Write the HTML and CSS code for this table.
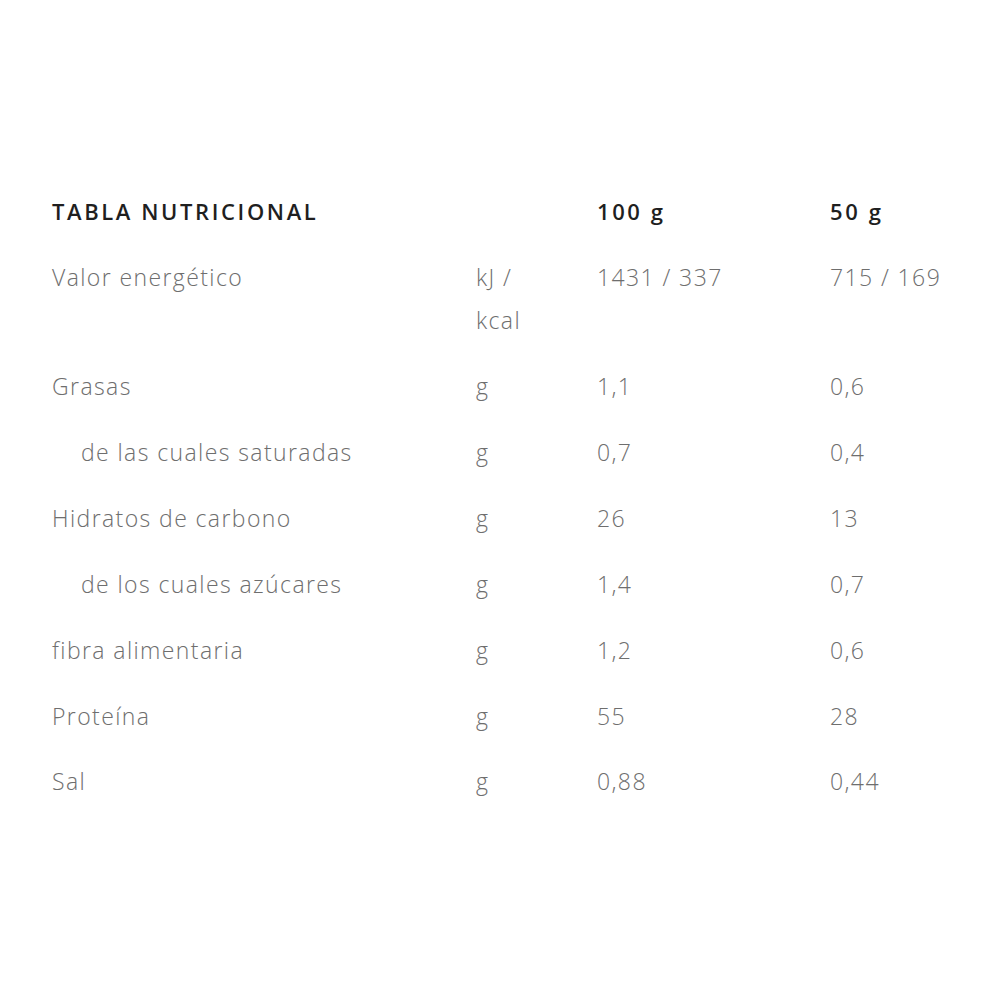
FILE: index.html
```html
<!DOCTYPE html>
<html lang="es">
<head>
<meta charset="utf-8">
<title>Tabla nutricional</title>
<link rel="stylesheet" href="styles.css">
</head>
<body>
<div class="table">
  <div class="row head">
    <div class="c name">TABLA NUTRICIONAL</div>
    <div class="c unit"></div>
    <div class="c v1">100 g</div>
    <div class="c v2">50 g</div>
  </div>
  <div class="row">
    <div class="c name">Valor energético</div>
    <div class="c unit">kJ /<br>kcal</div>
    <div class="c v1">1431 / 337</div>
    <div class="c v2">715 / 169</div>
  </div>
  <div class="row">
    <div class="c name">Grasas</div>
    <div class="c unit">g</div>
    <div class="c v1">1,1</div>
    <div class="c v2">0,6</div>
  </div>
  <div class="row">
    <div class="c name sub">de las cuales saturadas</div>
    <div class="c unit">g</div>
    <div class="c v1">0,7</div>
    <div class="c v2">0,4</div>
  </div>
  <div class="row">
    <div class="c name">Hidratos de carbono</div>
    <div class="c unit">g</div>
    <div class="c v1">26</div>
    <div class="c v2">13</div>
  </div>
  <div class="row">
    <div class="c name sub">de los cuales azúcares</div>
    <div class="c unit">g</div>
    <div class="c v1">1,4</div>
    <div class="c v2">0,7</div>
  </div>
  <div class="row">
    <div class="c name">fibra alimentaria</div>
    <div class="c unit">g</div>
    <div class="c v1">1,2</div>
    <div class="c v2">0,6</div>
  </div>
  <div class="row">
    <div class="c name">Proteína</div>
    <div class="c unit">g</div>
    <div class="c v1">55</div>
    <div class="c v2">28</div>
  </div>
  <div class="row">
    <div class="c name">Sal</div>
    <div class="c unit">g</div>
    <div class="c v1">0,88</div>
    <div class="c v2">0,44</div>
  </div>
</div>
</body>
</html>
```

FILE: styles.css
```css
html, body {
  margin: 0;
  padding: 0;
  background: #ffffff;
}
body {
  font-family: "Open Sans", "Liberation Sans", sans-serif;
}
.table {
  padding: 179px 0 0 52px;
  width: 1000px;
  box-sizing: border-box;
}
.row {
  display: grid;
  grid-template-columns: 424px 121px 233px 1fr;
  padding: 11.45px 0;
  line-height: 43px;
  font-size: 23px;
  font-weight: 300;
  letter-spacing: 1.4px;
  color: #6e6e6e;
}
.row.head {
  font-weight: 600;
  font-size: 22px;
  color: #1f1f1f;
  letter-spacing: 2.6px;
}
.sub {
  padding-left: 29px;
}
.c {
  white-space: nowrap;
}
```
